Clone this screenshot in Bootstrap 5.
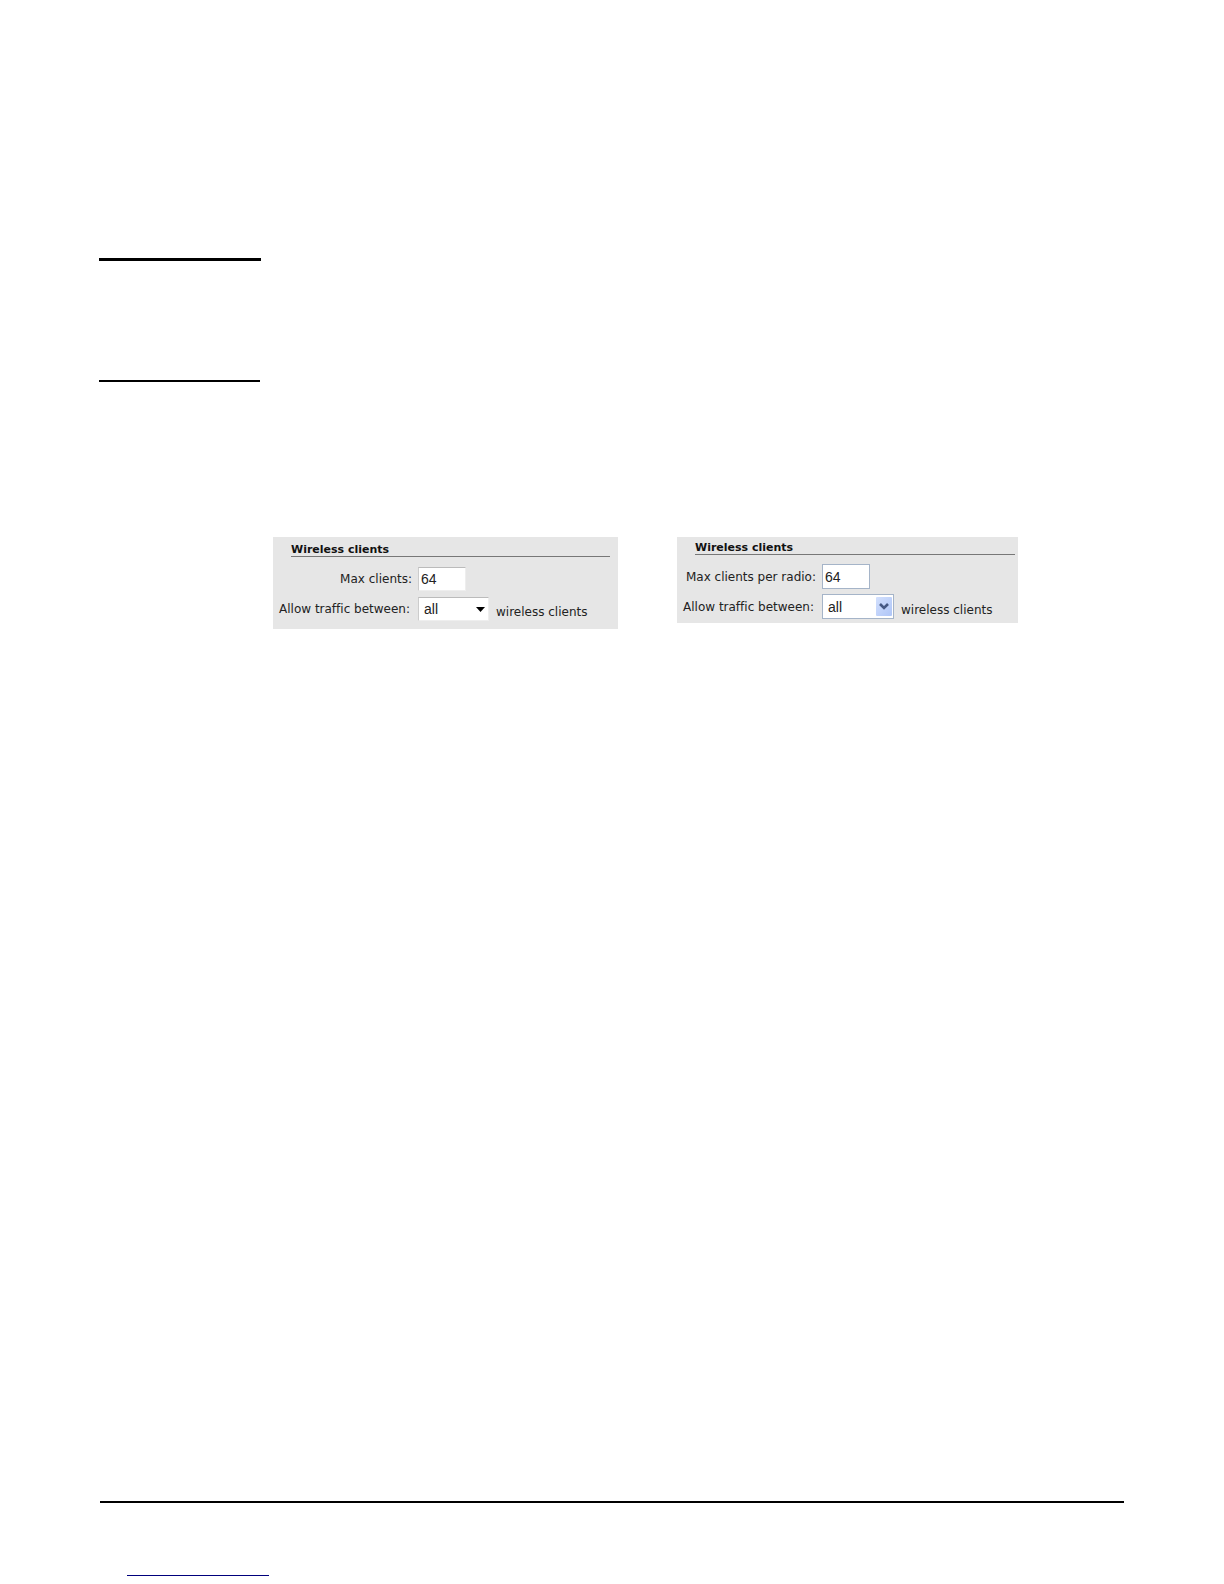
<!DOCTYPE html>
<html lang="en">
<head>
<meta charset="utf-8">
<meta name="viewport" content="width=device-width, initial-scale=1">
<title>Wireless clients</title>
<link href="https://cdn.jsdelivr.net/npm/bootstrap@5.3.0/dist/css/bootstrap.min.css" rel="stylesheet">
<style>
  body { background: #fff; color: #222; font-family: "DejaVu Sans", sans-serif; font-size: 12px; line-height: 16px; font-variant-ligatures: none; }
  .sheet { padding: 258px 100px 8px 99px; }
  .rule { opacity: 1; border: 0; background: #000; height: 2px; margin: 0; }
  .rule-thick { height: 3px; width: 162px; }
  .rule-thin { width: 161px; margin-top: 119px; }
  .panels { margin: 155px 0 0 174px; gap: 59px; }
  .panel { background: #e6e6e6; flex: 0 1 345px; height: 92px; padding: 6px 8px 0 8px; }
  .panel-xp { flex-basis: 341px; height: 86px; padding: 4px 3px 0 8px; }
  .panel-title { font-size: 11px; line-height: 13px; font-weight: bold; margin: 0 0 10px 10px; border-bottom: 1px solid #777; color: #111; }
  .panel-xp .panel-title { margin-bottom: 9px; }
  .field { height: 24px; margin-bottom: 6px; }
  .panel-xp .field { height: 25px; margin-bottom: 5px; }
  .field-label { width: 131px; margin-right: 6px; white-space: nowrap; display: flex; justify-content: flex-end; }
  .field-label.short { width: 129px; margin-right: 8px; }
  .panel-xp .field-label { padding-top: 1px; }
  .entry { font-family: "Liberation Sans", Arial, sans-serif; font-size: 14px; line-height: 20px; color: #222; background: #fff; border: 1px solid #eee; border-top-color: #bbb; border-left-color: #ccc; border-radius: 0; appearance: none; height: 24px; padding: 0 2px; }
  .entry-num { width: 48px; }
  .entry-pick { width: 71px; padding-left: 5px; }
  .panel-xp .entry { height: 25px; border-color: #a5b4c8; padding-top: 1px; }
  .panel-xp .entry-pick { width: 72px; }
  .arrow { position: absolute; right: 4px; top: 10px; pointer-events: none; }
  .arrow-xp { right: 2px; top: 3px; }
  .suffix { padding: 6px 0 0 7px; white-space: nowrap; }
  .foot-link { display: block; width: 142px; height: 1px; margin: 72px 0 0 28px; background: #00007c; }
  .foot-rule { margin-left: 1px; }
</style>
</head>
<body>
<div class="sheet min-vh-100 d-flex flex-column">
  <hr class="rule rule-thick">
  <hr class="rule rule-thin">
  <main class="panels d-flex align-items-start">
    <section class="panel">
      <h2 class="panel-title">Wireless clients</h2>
      <div class="field d-flex align-items-center">
        <label class="field-label" for="max1">Max clients:</label>
        <input class="entry entry-num" id="max1" type="text" value="64">
      </div>
      <div class="field d-flex align-items-center">
        <label class="field-label short" for="allow1">Allow traffic between:</label>
        <div class="position-relative d-flex">
          <select class="entry entry-pick" id="allow1"><option>all</option></select>
          <svg class="arrow" width="9" height="5" viewBox="0 0 9 5" aria-hidden="true"><path d="M0 0h9L4.500 5z" fill="#000"/></svg>
        </div>
        <span class="suffix">wireless clients</span>
      </div>
    </section>
    <section class="panel panel-xp">
      <h2 class="panel-title">Wireless clients</h2>
      <div class="field d-flex align-items-center">
        <label class="field-label" for="max2">Max clients per radio:</label>
        <input class="entry entry-num" id="max2" type="text" value="64">
      </div>
      <div class="field d-flex align-items-center">
        <label class="field-label short" for="allow2">Allow traffic between:</label>
        <div class="position-relative d-flex">
          <select class="entry entry-pick" id="allow2"><option>all</option></select>
          <svg class="arrow arrow-xp" width="16" height="19" viewBox="0 0 16 19" aria-hidden="true">
            <defs><linearGradient id="blue" x1="0" y1="0" x2="1" y2="1"><stop offset="0" stop-color="#d3e0fd"/><stop offset="1" stop-color="#aec5f7"/></linearGradient></defs>
            <rect width="16" height="19" rx="1" fill="url(#blue)"/>
            <path d="M4 7l4 4 4-4" fill="none" stroke="#465984" stroke-width="2.600"/>
          </svg>
        </div>
        <span class="suffix">wireless clients</span>
      </div>
    </section>
  </main>
  <footer class="mt-auto">
    <hr class="rule foot-rule">
    <a class="foot-link" href="#" aria-label="Website"></a>
  </footer>
</div>
<script src="https://cdn.jsdelivr.net/npm/bootstrap@5.3.0/dist/js/bootstrap.bundle.min.js"></script>
</body>
</html>
